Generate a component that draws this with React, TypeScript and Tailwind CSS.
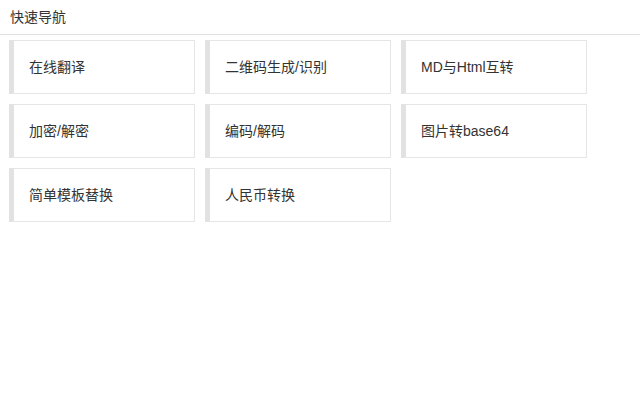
const links = [
  '在线翻译',
  '二维码生成/识别',
  'MD与Html互转',
  '加密/解密',
  '编码/解码',
  '图片转base64',
  '简单模板替换',
  '人民币转换',
]

export default function App() {
  return (
    <div
      className="min-h-[400px] w-[640px] bg-white text-[#333]"
      style={{ fontFamily: '"Liberation Sans", "Noto Sans CJK SC", sans-serif' }}
    >
      <div className="flex h-[35px] items-center border-b border-[#e2e2e2] px-[10px] text-[14px]">
        快速导航
      </div>
      <div className="grid w-fit grid-cols-[repeat(3,186px)] gap-[10px] pl-[9px] pt-[5px]">
        {links.map((name) => (
          <a
            key={name}
            href="#"
            className="flex h-[54px] items-center border border-l-[5px] border-[#e6e6e6] border-l-[#e2e2e2] pl-[15px] text-[14px] text-[#333]"
          >
            {name}
          </a>
        ))}
      </div>
    </div>
  )
}
